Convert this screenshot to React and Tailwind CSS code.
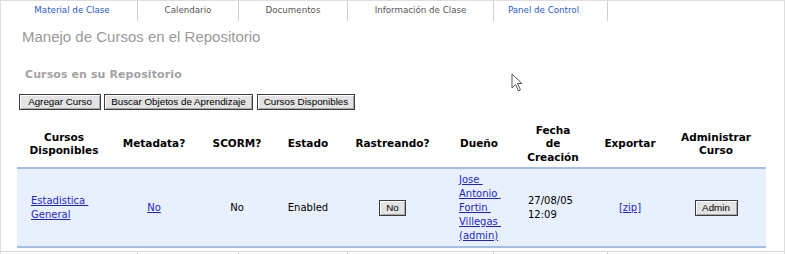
import React from "react";

const tabs = [
  { label: "Material de Clase", w: "w-[131px]", active: true },
  { label: "Calendario", w: "w-[101px]" },
  { label: "Documentos", w: "w-[109px]" },
  { label: "Información de Clase", w: "w-[146px]" },
  { label: "Panel de Control", w: "w-[114px] pr-[14px]", active: true },
];

const dv = { fontFamily: '"DejaVu Sans", Verdana, sans-serif' };
const lib = { fontFamily: '"Liberation Sans", Arial, sans-serif' };

function OldButton({ children, className = "" }) {
  return (
    <button
      className={
        "h-[16px] flex items-center justify-center border border-[#3c3c3c] bg-[#e3e3e3] text-[9.8px] text-black leading-none shadow-[inset_1px_1px_0_#ffffff,inset_-1px_-1px_0_#a8a8a8] " +
        className
      }
      style={lib}
    >
      {children}
    </button>
  );
}

function Link({ children }) {
  return <a className="text-[#1f1fd6] underline block">{children}</a>;
}

export default function App() {
  return (
    <div className="relative w-[785px] h-[254px] overflow-hidden bg-white border-l border-r border-t border-[#dedede]">
      {/* top tabs */}
      <div className="flex h-[20px] pl-[6px]" style={dv}>
        {tabs.map((t) => (
          <div
            key={t.label}
            className={`${t.w} h-full flex items-center justify-center border-r border-[#cfcfcf] text-[8.7px] ${
              t.active ? "text-[#2a5bd0]" : "text-[#555]"
            }`}
          >
            {t.label}
          </div>
        ))}
      </div>

      <h1 className="mt-[7px] ml-[21px] text-[15px] leading-[18px] text-[#9a9a9a]" style={lib}>
        Manejo de Cursos en el Repositorio
      </h1>

      <h2
        className="mt-[22px] ml-[24px] text-[11px] leading-[13px] font-bold text-[#a3a3a3] tracking-[0.1px]"
        style={dv}
      >
        Cursos en su Repositorio
      </h2>

      <div className="mt-[13px] ml-[18px] flex">
        <OldButton className="w-[82px]">Agregar Curso</OldButton>
        <OldButton className="w-[149px] ml-[3px]">Buscar Objetos de Aprendizaje</OldButton>
        <OldButton className="w-[98px] ml-[4px]">Cursos Disponibles</OldButton>
      </div>

      {/* table */}
      <div className="mt-[11px] ml-[16px] w-[749px]" style={dv}>
        <div className="grid grid-cols-[94px_86px_80px_62px_107px_66px_82px_72px_100px] h-[46px] items-center text-center text-[10.5px] font-bold leading-[13.5px] text-black">
          <div>Cursos<br />Disponibles</div>
          <div>Metadata?</div>
          <div>SCORM?</div>
          <div>Estado</div>
          <div>Rastreando?</div>
          <div>Dueño</div>
          <div>Fecha<br />de<br />Creación</div>
          <div>Exportar</div>
          <div>Administrar<br />Curso</div>
        </div>
        <div className="grid grid-cols-[94px_86px_80px_62px_107px_66px_82px_72px_100px] h-[81px] items-center bg-[#e8f0fd] border-t-2 border-b-2 border-[#a2bfea] text-[10px] leading-[14px] text-black">
          <div className="pl-[14px]">
            <Link>Estadistica&nbsp;</Link>
            <Link>General</Link>
          </div>
          <div className="flex justify-center">
            <a className="text-[#1f1fd6] underline">No</a>
          </div>
          <div className="text-center">No</div>
          <div className="text-center">Enabled</div>
          <div className="flex justify-center">
            <OldButton className="w-[27px]">No</OldButton>
          </div>
          <div className="pl-[13px]">
            <Link>Jose&nbsp;</Link>
            <Link>Antonio&nbsp;</Link>
            <Link>Fortin&nbsp;</Link>
            <Link>Villegas&nbsp;</Link>
            <Link>(admin)</Link>
          </div>
          <div className="pl-[16px]">
            27/08/05
            <br />
            12:09
          </div>
          <div className="flex justify-center">
            <a className="text-[#1f1fd6] underline">[zip]</a>
          </div>
          <div className="flex justify-center">
            <OldButton className="w-[43px]">Admin</OldButton>
          </div>
        </div>
      </div>

      {/* bottom tabs (cut off) */}
      <div className="mt-[3px] flex h-[10px] pl-[6px] border-t border-[#dcdcdc]">
        {tabs.map((t) => (
          <div key={t.label} className={`${t.w} h-full border-r border-[#cfcfcf]`} />
        ))}
      </div>

      {/* mouse pointer */}
      <svg className="absolute left-[510px] top-[72px]" width="14" height="20" viewBox="0 0 14 20">
        <path
          d="M1 1 L1 15 L4.5 11.5 L7.5 18 L9.5 17 L6.5 10.5 L11 10.5 Z"
          fill="#fff"
          stroke="#555"
          strokeWidth="1"
          strokeLinejoin="miter"
        />
      </svg>
    </div>
  );
}
